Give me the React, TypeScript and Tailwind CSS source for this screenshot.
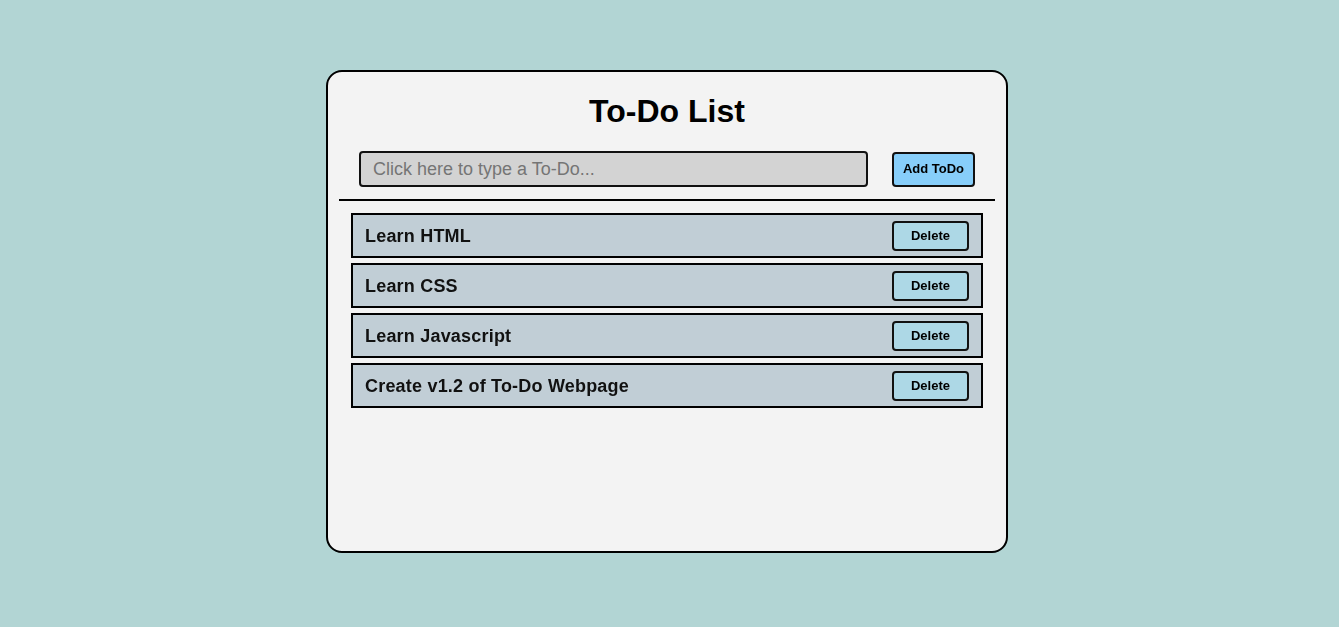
import React from "react";

const todos = ["Learn HTML", "Learn CSS", "Learn Javascript", "Create v1.2 of To-Do Webpage"];

export default function App() {
  return (
    <div className="min-h-screen w-full bg-[#b2d5d4] flex justify-center pr-[5px] pt-[70px] font-['Liberation_Sans',Arial,sans-serif]">
      <div className="w-[682px] h-[483px] rounded-[16px] border-2 border-black bg-[#f3f3f3] flex flex-col">
        <h1 className="mt-[21px] text-center text-[32px] leading-[37px] font-bold text-black">To-Do List</h1>
        <div className="mt-[21px] flex items-center justify-between px-[31px]">
          <input
            autoFocus
            type="text"
            placeholder="Click here to type a To-Do..."
            className="w-[509px] h-[36px] rounded-[4px] border-2 border-[#111] bg-[#d3d3d3] pl-[12px] text-[18px] text-black placeholder:text-[#757575] outline-none font-['Liberation_Sans',Arial,sans-serif]"
          />
          <button className="w-[83px] h-[35px] rounded-[4px] border-2 border-[#111] bg-[#87cefa] text-[13px] font-bold text-black">
            Add ToDo
          </button>
        </div>
        <div className="mx-[11px] mt-[12px] h-[2px] bg-black" />
        <ul className="mt-[12px] mx-[23px] flex flex-col gap-[5px]">
          {todos.map((t) => (
            <li
              key={t}
              className="h-[45px] border-2 border-black bg-[#c1ced6] flex items-center justify-between pl-[12px] pr-[12px]"
            >
              <span className="mt-[2px] text-[18px] font-bold text-[#111] tracking-[0.2px]">{t}</span>
              <button className="w-[77px] h-[30px] rounded-[4px] border-2 border-[#111] bg-[#add8e6] text-[13px] font-bold text-black">
                Delete
              </button>
            </li>
          ))}
        </ul>
      </div>
    </div>
  );
}
